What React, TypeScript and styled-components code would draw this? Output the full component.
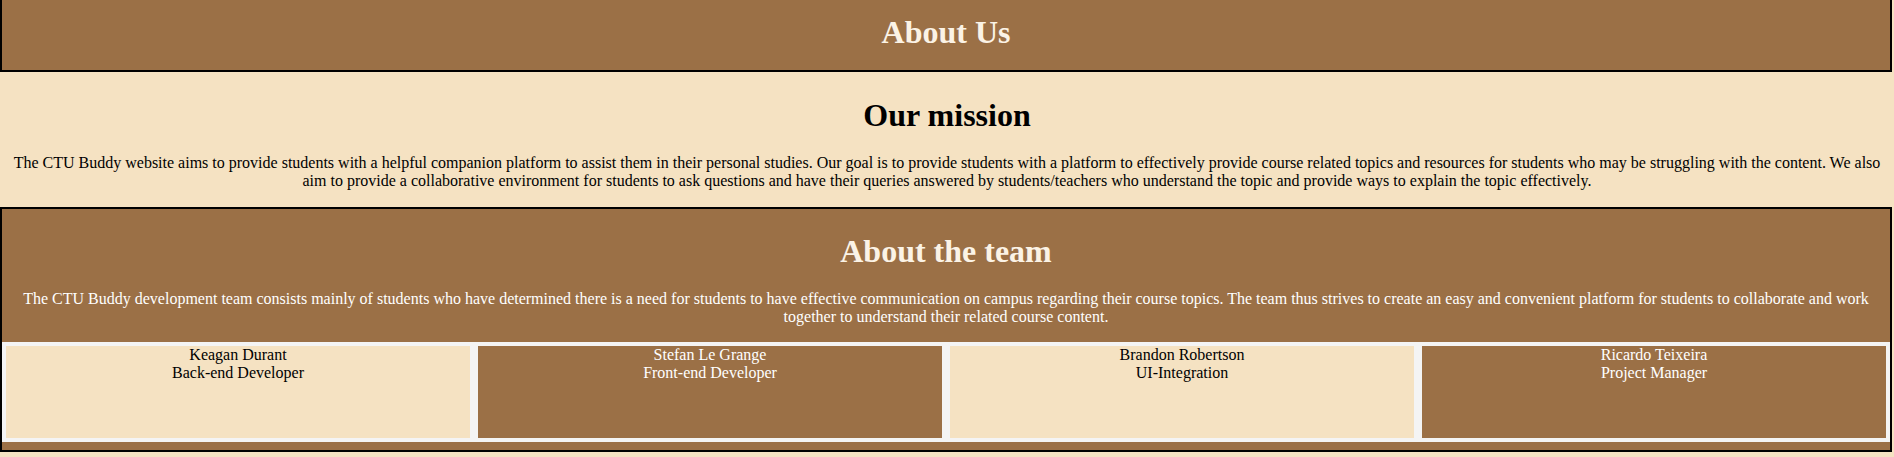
import React from "react";
import styled, { createGlobalStyle } from "styled-components";

const BROWN = "#9b7046";
const CREAM = "#f5e2c2";

const GlobalStyle = createGlobalStyle`
  html, body {
    margin: 0;
    padding: 0;
    background-color: ${CREAM};
    font-family: "Liberation Serif", "Times New Roman", serif;
    font-size: 16px;
  }
`;

const Page = styled.div`
  width: 100%;
  overflow: hidden;
`;

const HeaderBar = styled.header`
  display: flow-root;
  box-sizing: border-box;
  width: calc(100% - 2px);
  background-color: ${BROWN};
  border: 2px solid #000;
  border-top-width: 0;
  text-align: center;
`;

const Title = styled.h1<{ light?: boolean; compact?: boolean }>`
  margin: ${({ compact }) => (compact ? "14px 0 20px" : "24px 0 21px")};
  font-size: 32px;
  line-height: 36px;
  font-weight: bold;
  color: ${({ light }) => (light ? "#fbf3e6" : "#000")};
`;

const Mission = styled.section`
  text-align: center;
  padding: 1px 0 0;
`;

const Text = styled.p<{ light?: boolean }>`
  margin: 16px 0;
  line-height: 18.4px;
  color: ${({ light }) => (light ? "#fff" : "#000")};
`;

const MissionText = styled(Text)`
  margin: 0 8px 16px;
`;

const TeamBox = styled.section`
  box-sizing: border-box;
  width: calc(100% - 2px);
  background-color: ${BROWN};
  border: 2px solid #000;
  padding-bottom: 8px;
  text-align: center;
`;

const TeamText = styled(Text)`
  margin: 0 16px 15px;
`;

const TeamGrid = styled.div`
  display: grid;
  grid-template-columns: repeat(4, 1fr);
`;

const Member = styled.div<{ dark: boolean }>`
  box-sizing: border-box;
  height: 100px;
  border: 4px solid #f4f4f4;
  background-color: ${({ dark }) => (dark ? BROWN : CREAM)};
  color: ${({ dark }) => (dark ? "#fff" : "#000")};
  line-height: 18.4px;
`;

const team = [
  { name: "Keagan Durant", role: "Back-end Developer" },
  { name: "Stefan Le Grange", role: "Front-end Developer" },
  { name: "Brandon Robertson", role: "UI-Integration" },
  { name: "Ricardo Teixeira", role: "Project Manager" },
];

export default function App() {
  return (
    <Page>
      <GlobalStyle />
      <HeaderBar>
        <Title light compact>
          About Us
        </Title>
      </HeaderBar>
      <Mission>
        <Title>Our mission</Title>
        <MissionText>
          The CTU Buddy website aims to provide students with a helpful companion platform to
          assist them in their personal studies. Our goal is to provide students with a platform
          to effectively provide course related topics and resources for students who may be
          struggling with the content. We also aim to provide a collaborative environment for
          students to ask questions and have their queries answered by students/teachers who
          understand the topic and provide ways to explain the topic effectively.
        </MissionText>
      </Mission>
      <TeamBox>
        <Title light>About the team</Title>
        <TeamText light>
          The CTU Buddy development team consists mainly of students who have determined there is
          a need for students to have effective communication on campus regarding their course
          topics. The team thus strives to create an easy and convenient platform for students to
          collaborate and work together to understand their related course content.
        </TeamText>
        <TeamGrid>
          {team.map((m, i) => (
            <Member key={m.name} dark={i % 2 === 1}>
              {m.name}
              <br />
              {m.role}
            </Member>
          ))}
        </TeamGrid>
      </TeamBox>
    </Page>
  );
}
